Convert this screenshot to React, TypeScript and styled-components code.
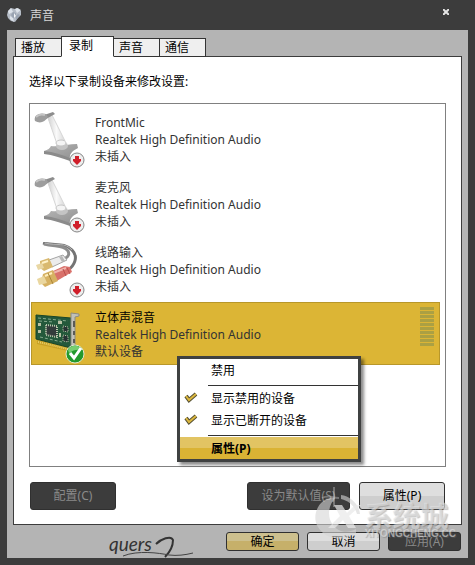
import React, { useState } from "react";
import styled, { createGlobalStyle, css } from "styled-components";

const Global = createGlobalStyle`
  *, *::before, *::after { box-sizing: border-box; }
  body { margin: 0; background: #3c3c3c; }
  body, button { font-family: "Noto Sans", "Noto Sans CJK SC", sans-serif; font-size: 12px; color: #000; }
`;

const Window = styled.main`
  position: relative;
  display: flex;
  flex-direction: column;
  min-height: 100vh;
  padding: 0 7px 7px;
  background: #3c3c3c;
`;

const TitleBar = styled.header`
  display: flex;
  align-items: center;
  gap: 8px;
  height: 30px;
`;

const Title = styled.h1`
  flex: 1;
  margin: 0;
  font-size: 12px;
  font-weight: 400;
  color: #d8d8d8;
`;

const CloseButton = styled.button`
  display: flex;
  align-items: center;
  justify-content: center;
  width: 16px;
  height: 16px;
  margin: 0 14px 6px 0;
  padding: 0;
  border: 0;
  background: none;
`;

const Body = styled.div`
  flex: 1;
  display: flex;
  flex-direction: column;
  padding: 6px 6px 7px;
  background: #b4b4b4;
`;

const Tabs = styled.div`
  position: relative;
  z-index: 1;
  display: flex;
  align-items: flex-end;
  height: 21px;
  margin-bottom: -1px;
  padding-left: 2px;
`;

const Tab = styled.button<{ $active: boolean }>`
  width: 47px;
  height: 19px;
  margin-right: -1px;
  padding: 0 0 0 5px;
  border: 1px solid #333;
  background: #efefef;
  line-height: 18px;
  text-align: left;
  ${(p) =>
    p.$active &&
    css`
      z-index: 1;
      width: 53px;
      height: 21px;
      padding: 0 0 2px 7px;
      border-bottom-color: #fff;
      background: #fff;
    `}
`;

const Panel = styled.section`
  flex: 1;
  display: flex;
  flex-direction: column;
  padding: 15px 15px 14px;
  border: 1px solid #3c3c3c;
  background: #fff;
`;

const Prompt = styled.p`
  margin: 0 0 11px;
  line-height: 20px;
`;

const DeviceList = styled.ul`
  flex: 1;
  display: flex;
  flex-direction: column;
  gap: 2px;
  margin: 0 0 15px;
  padding: 3px 5px 3px 1px;
  border: 1px solid #808080;
  list-style: none;
`;

const DeviceRow = styled.li<{ $selected: boolean }>`
  display: grid;
  grid-template-columns: 58px 1fr auto;
  column-gap: 5px;
  height: 63px;
  padding: 4px 5px 4px 0;
  border: 1px solid ${(p) => (p.$selected ? "#b8972a" : "transparent")};
  background: ${(p) => (p.$selected ? "#dcb535" : "transparent")};
  color: #333;
`;

const DeviceText = styled.div`
  padding-top: 2px;
  line-height: 17px;
`;

const DeviceName = styled.div<{ $strong: boolean }>`
  color: ${(p) => (p.$strong ? "#000" : "#333")};
`;

const Meter = styled.div`
  display: flex;
  flex-direction: column;
  gap: 1px;
  width: 14px;
`;

const MeterBar = styled.span`
  height: 3px;
  background: #aba043;
`;

const ButtonRow = styled.div`
  display: flex;
  gap: 9px;
  padding: 0 1px;
`;

const Spacer = styled.span`
  flex: 1;
`;

type Tone = "plain" | "gold" | "dark";

const tones = {
  plain: "linear-gradient(#dedede 0 50%, #cecece 50% 100%)",
  gold: "linear-gradient(#cdc08e 0 50%, #c6b06a 50% 100%)",
  dark: "#3c3c3c",
};

const PushButton = styled.button<{ $tone: Tone; $wide?: boolean }>`
  width: ${(p) => (p.$wide ? 103 : 86)}px;
  height: 28px;
  padding: 0;
  border: 1px solid #303030;
  border-radius: 3px;
  background: ${(p) => tones[p.$tone]};
  color: ${(p) => (p.$tone === "dark" ? "#8a8a8a" : "#000")};
  line-height: 24px;
`;

const FooterButton = styled(PushButton)`
  width: 73px;
  height: 19px;
  line-height: 16px;
`;

const Footer = styled.footer`
  display: flex;
  justify-content: flex-end;
  gap: 8px;
  padding: 7px 1px 0 0;
`;

const Signature = styled.div`
  position: absolute;
  left: 109px;
  bottom: 6px;
  width: 88px;
  height: 26px;
  color: #333;
  font: italic 19px/22px "Lato", sans-serif;
  svg { position: absolute; left: 0; top: 0; }
`;

const Menu = styled.div`
  position: absolute;
  z-index: 3;
  left: 177px;
  top: 356px;
  width: 184px;
  border: 3px solid #3f4141;
  background: #fff;
  box-shadow: 3px 3px 3px rgba(0, 0, 0, 0.45);
`;

const MenuItem = styled.button<{ $default?: boolean }>`
  display: grid;
  grid-template-columns: 31px 1fr;
  align-items: center;
  width: 100%;
  height: 22px;
  padding: 2px 0 0;
  border: 0;
  background: ${(p) =>
    p.$default ? "linear-gradient(#e2c463 0 50%, #dab334 50% 100%)" : "#fff"};
  font-weight: ${(p) => (p.$default ? 700 : 400)};
  line-height: 20px;
  text-align: left;
  svg { margin: 0 0 4px 4px; }
`;

const Separator = styled.hr`
  height: 6px;
  margin: 0 0 0 28px;
  border: solid #fff;
  border-width: 4px 0 1px;
  background: #333;
`;

const Watermark = styled.div`
  position: absolute;
  z-index: 4;
  right: 19px;
  bottom: 22px;
  display: flex;
  align-items: flex-end;
  gap: 3px;
  pointer-events: none;
  color: rgba(228, 228, 228, 0.6);
  text-shadow: 1px 1px 1px rgba(110, 110, 110, 0.4);
`;

const WatermarkText = styled.div`
  margin-bottom: 4px;
  font: 700 28px/28px "Noto Sans CJK SC", sans-serif;
  small {
    display: block;
    font: 700 10px/10px "Liberation Sans", sans-serif;
  }
`;

const AppIcon = () => (
  <svg width="15" height="16" viewBox="0 0 15 16" aria-hidden="true">
    <path d="M1 4 4 1l4 1 3-1 3 3v4l-3 3-3 4-4-1-3-3L0 8z" fill="#b5bcc6" />
    <path d="m4 1 2 4-4 2-1-3zM8 2l2 4 4-3-4-2zM3 9l3 2 1 4-4-3z" fill="#dde3ea" />
    <path d="m6 5 3 1v4l-3 1-2-3zM11 7l2 1-4 5V9z" fill="#9aa4b2" />
    <path d="m7 6 2 3-2 2z" fill="#f5f7f9" />
  </svg>
);

const Unplugged = () => (
  <g>
    <circle cx="45" cy="48" r="7" fill="#ededed" stroke="#858585" />
    <path d="M43 44h4v3h2v2l-4 4-4-4v-2h2z" fill="#d01f2a" />
  </g>
);

const MicIcon = () => (
  <svg width="56" height="58" viewBox="0 0 56 58" aria-hidden="true">
    <defs>
      <linearGradient id="micBase" x2="1" y2="1">
        <stop stopColor="#b5b5b5" />
        <stop offset="1" stopColor="#8f8f8f" />
      </linearGradient>
      <linearGradient id="micArm" x2="1" y2="0">
        <stop stopColor="#d2d2d2" />
        <stop offset=".5" stopColor="#fafafa" />
        <stop offset="1" stopColor="#d8d8d8" />
      </linearGradient>
    </defs>
    <path d="M19 34c9 1 18-2 26-2l1 4c-6 3-9 6-8 12-9-3-17-6-26-7v-2c4-1 6-3 7-5z" fill="url(#micBase)" />
    <path d="M12 39c10 1 18 4 26 7v3c-9-3-17-6-26-7z" fill="#8b8b8b" />
    <path d="m16 6 4-3 13 26-8 3z" fill="url(#micArm)" stroke="#d6d6d6" />
    <ellipse cx="30" cy="34" rx="6" ry="4" fill="#c4c4c4" />
    <ellipse cx="29" cy="31" rx="5" ry="3" fill="#f4f4f4" stroke="#c6c6c6" />
    <path d="m12 3 9-3 2 2-9 5z" fill="#8d8d8d" />
    <path d="M3 9c-2-6 5-9 11-7l2 3c-3 5-8 7-13 4z" fill="#9d9d9d" />
    <path d="M4 5c3-3 6-3 9-2" fill="none" stroke="#c4c4c4" strokeWidth="2" />
    <Unplugged />
  </svg>
);

const LineInIcon = () => (
  <svg width="56" height="58" viewBox="0 0 56 58" aria-hidden="true">
    <path d="M11 1c12 3 21-1 29 7 7 7 2 16-4 20" fill="none" stroke="#747474" strokeWidth="3" />
    <path d="M12 2c12 3 20 1 24 7 2 4 0 6-4 8" fill="none" stroke="#8d8d8d" strokeWidth="3" />
    <path d="M13 1c12 3 20-1 27 7" fill="none" stroke="#b6b6b6" />
    <path d="m17 18 14-5 4 5-15 7z" fill="#ececec" stroke="#a5a5a5" />
    <path d="m27 15 3-1 3 5-3 1z" fill="#b8b8b8" />
    <path d="m8 19 9-3 4 9-9 4-4-3z" fill="#d9b96f" />
    <path d="m4 23 6-2 2 5-6 2z" fill="#e9d7a4" />
    <path d="m10 21 6-2" stroke="#fff2c8" strokeWidth="2" />
    <path d="m19 30 13-6 6 1 2 5-17 10z" fill="#d9716b" />
    <path d="m21 31 13-5" stroke="#f1b5ae" strokeWidth="2" />
    <path d="m31 27 3 7M35 26l3 6" stroke="#b94f4c" />
    <path d="m11 32 10-4 5 11-13 6-4-4z" fill="#d6b162" />
    <path d="m5 37 7-3 3 7-8 2z" fill="#ead7a0" />
    <path d="m13 34 7-3" stroke="#ffefbd" strokeWidth="2" />
    <path d="m16 31 5 11" stroke="#a98436" />
    <Unplugged />
  </svg>
);

const SoundCardIcon = () => (
  <svg width="56" height="58" viewBox="0 0 56 58" aria-hidden="true">
    <path d="m5 33 31 7v4L5 37z" fill="#c8a024" />
    <path d="m6 35 30 7" stroke="#ead06a" strokeWidth="2" strokeDasharray="1 1" />
    <path d="M4 8 39 11v30L4 32z" fill="#24593b" stroke="#174528" />
    <path d="m6 11 30 3M7 14l15 1M8 30l22 5" stroke="#86aa8d" strokeDasharray="3 2" />
    <path d="m14 18 11 1v11l-11-2z" fill="#333c3b" stroke="#bdc9ad" strokeWidth="2" strokeDasharray="1 1" />
    <path d="m31 19 5 1v5l-5-1zM31 28l5 1v6l-5-1z" fill="#253332" stroke="#b9c3a9" strokeDasharray="1 1" />
    <path d="M6 16h3v3H6zM6 23h3v3H6zM26 14h4v3h-4zM27 26h2v4h-2z" fill="#b9c1a4" />
    <path d="m39 6 8 1v2l-4 1v33l-4-1z" fill="#c1c1b9" stroke="#8b8b80" />
    <path d="M42 14v6M42 24v4M42 32v4" stroke="#5a5b58" strokeWidth="2" />
    <circle cx="43" cy="47" r="9" fill="#22992c" stroke="#dfe9d0" />
    <path d="M36 43a8 8 0 0 1 14 0c-5-1-9 0-13 3z" fill="#76ce70" />
    <path d="m38 46 4 5 7-10" fill="none" stroke="#fff" strokeWidth="3" />
  </svg>
);

const Check = () => (
  <svg width="14" height="11" viewBox="0 0 14 11" aria-hidden="true">
    <path d="m2 4 3 4 7-6" fill="none" stroke="#555034" strokeWidth="4" />
    <path d="m2 4 3 4 7-6" fill="none" stroke="#ddb83e" strokeWidth="2" />
  </svg>
);

const devices = [
  { name: "FrontMic", state: "未插入", Icon: MicIcon },
  { name: "麦克风", state: "未插入", Icon: MicIcon },
  { name: "线路输入", state: "未插入", Icon: LineInIcon },
  { name: "立体声混音", state: "默认设备", Icon: SoundCardIcon },
];

const tabNames = ["播放", "录制", "声音", "通信"];

export default function App() {
  const [tab, setTab] = useState(1);
  const [selected, setSelected] = useState(3);

  return (
    <>
      <Global />
      <Window>
        <TitleBar>
          <AppIcon />
          <Title>声音</Title>
          <CloseButton aria-label="关闭">
            <svg width="6" height="6" viewBox="0 0 6 6" aria-hidden="true">
              <path d="m0 0 6 6M6 0 0 6" stroke="#e4e4e4" strokeWidth="2" />
            </svg>
          </CloseButton>
        </TitleBar>
        <Body>
          <Tabs role="tablist">
            {tabNames.map((name, i) => (
              <Tab key={name} role="tab" aria-selected={i === tab} $active={i === tab} onClick={() => setTab(i)}>
                {name}
              </Tab>
            ))}
          </Tabs>
          <Panel>
            <Prompt id="prompt">选择以下录制设备来修改设置:</Prompt>
            <DeviceList role="listbox" aria-labelledby="prompt">
              {devices.map(({ name, state, Icon }, i) => (
                <DeviceRow
                  key={name}
                  role="option"
                  aria-selected={i === selected}
                  $selected={i === selected}
                  onClick={() => setSelected(i)}
                >
                  <Icon />
                  <DeviceText>
                    <DeviceName $strong={i === selected}>{name}</DeviceName>
                    <div>Realtek High Definition Audio</div>
                    <div>{state}</div>
                  </DeviceText>
                  {i === 3 && (
                    <Meter>
                      {Array.from({ length: 10 }, (_, n) => (
                        <MeterBar key={n} />
                      ))}
                    </Meter>
                  )}
                </DeviceRow>
              ))}
            </DeviceList>
            <ButtonRow>
              <PushButton $tone="dark" disabled>配置(C)</PushButton>
              <Spacer />
              <PushButton $tone="dark" $wide disabled>设为默认值(S)</PushButton>
              <PushButton $tone="plain">属性(P)</PushButton>
            </ButtonRow>
          </Panel>
          <Footer>
            <FooterButton $tone="gold">确定</FooterButton>
            <FooterButton $tone="plain">取消</FooterButton>
            <FooterButton $tone="dark" disabled>应用(A)</FooterButton>
          </Footer>
        </Body>
        <Signature>
          quers
          <svg width="88" height="26" viewBox="0 0 88 26" aria-hidden="true">
            <path d="M47 11c5-5 15-9 17-4 0 6-3 12-8 17" fill="none" stroke="#333" strokeWidth="2" />
            <path d="M14 23c15-6 36-3 46-1 8 1 16 0 24-2" fill="none" stroke="#444" />
          </svg>
        </Signature>
        <Menu role="menu">
          <MenuItem role="menuitem"><span />禁用</MenuItem>
          <Separator />
          <MenuItem role="menuitemcheckbox" aria-checked="true"><Check />显示禁用的设备</MenuItem>
          <MenuItem role="menuitemcheckbox" aria-checked="true"><Check />显示已断开的设备</MenuItem>
          <Separator />
          <MenuItem role="menuitem" $default><span />属性(P)</MenuItem>
        </Menu>
        <Watermark>
          <svg width="48" height="62" viewBox="0 0 48 62" aria-hidden="true">
            <path d="M20 6v20" stroke="#ddd" opacity=".7" />
            <path d="M8 17c7-4 9 0 17 0" fill="none" stroke="#ccc" strokeWidth="2" opacity=".4" />
            <path fillRule="evenodd" d="M21 17C7 15-4 33 4 46c7 12 24 16 38 6v-4c-9 5-18 3-23-4-6-8-5-19 2-27M27 14c9 1 18 9 19 19h-3c-2-7-7-13-16-15z" fill="#d6d6d6" opacity=".6" />
            <path d="M20 24h8l5 8 8-8h6L35 35l7 12h-8l-5-8-8 8h-7l12-12z" fill="#e8e8e8" opacity=".7" />
          </svg>
          <WatermarkText>
            系统城
            <small>XITONGCHENG.CC</small>
          </WatermarkText>
        </Watermark>
      </Window>
    </>
  );
}
